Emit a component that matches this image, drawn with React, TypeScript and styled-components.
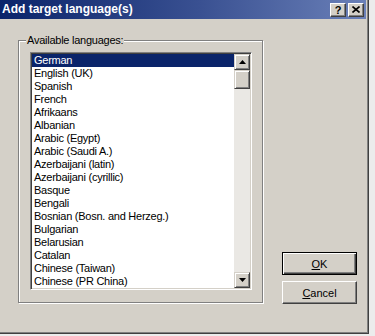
import React from 'react';
import styled, { createGlobalStyle } from 'styled-components';

const GlobalStyle = createGlobalStyle`
    html, body {
        margin: 0;
        padding: 0;
        background: #ececec;
    }
    body {
        font-family: "Liberation Sans", Arial, sans-serif;
        font-size: 11px;
    }
`

const Window = styled.div`
    width: 369px;
    height: 334px;
    box-sizing: border-box;
    background: #d4d0c8;
    border-right: 1px solid #404040;
    border-bottom: 1px solid #404040;
    box-shadow: inset -1px -1px #808080;
    padding-right: 2px;
    display: flex;
    flex-direction: column;
`

const TitleBar = styled.div`
    height: 19px;
    flex-shrink: 0;
    display: flex;
    align-items: center;
    padding: 0 2px 0 2px;
    background: linear-gradient(to right, #0a246a 0%, #3a5192 55%, #6a80b8 100%);
    color: #fff;
`

const TitleText = styled.span`
    flex: 1;
    font-weight: bold;
    font-size: 12px;
    line-height: 19px;
    white-space: nowrap;
`

const CaptionButtons = styled.div`
    display: flex;
    gap: 2px;
`

const Bevel = `
    box-sizing: border-box;
    background: #d4d0c8;
    border: 1px solid;
    border-color: #ffffff #404040 #404040 #ffffff;
    box-shadow: inset -1px -1px #808080;
`

const CaptionButton = styled.div`
    ${ Bevel }
    width: 16px;
    height: 14px;
    display: flex;
    align-items: center;
    justify-content: center;
    color: #000;
    font-weight: bold;
    font-size: 11px;
    line-height: 12px;
`

const Body = styled.div`
    display: flex;
    align-items: flex-end;
    padding: 15px 0 0 18px;
`

const GroupBox = styled.fieldset`
    margin: 0;
    width: 245px;
    box-sizing: border-box;
    padding: 6px 10px 12px 11px;
    border: 1px solid #808080;
    box-shadow: inset 1px 1px #fff, 1px 1px #fff;
`

const GroupLabel = styled.legend`
    margin-left: -4px;
    padding: 0 1px;
    line-height: 12px;
    font-size: 11px;
    letter-spacing: -0.25px;
    background: #d4d0c8;
    color: #000;
`

const ListBox = styled.div`
    width: 222px;
    height: 238px;
    box-sizing: border-box;
    display: flex;
    padding: 1px;
    background: #fff;
    border: 1px solid;
    border-color: #808080 #ffffff #ffffff #808080;
    box-shadow: inset 1px 1px #404040, inset -1px -1px #d4d0c8;
`

const Items = styled.div`
    flex: 1;
    overflow: hidden;
`

const Item = styled.div<{ $selected?: boolean; }>`
    height: 13px;
    line-height: 13px;
    padding-left: 2px;
    font-size: 11px;
    letter-spacing: -0.25px;
    white-space: nowrap;
    color: ${ props => props.$selected ? '#fff' : '#000' };
    background: ${ props => props.$selected ? '#0a246a' : 'transparent' };
`

const ScrollBar = styled.div`
    width: 16px;
    display: flex;
    flex-direction: column;
    background: #eae8e4;
`

const ScrollButton = styled.div`
    ${ Bevel }
    border-color: #d4d0c8 #404040 #404040 #d4d0c8;
    box-shadow: inset 1px 1px #fff, inset -1px -1px #808080;
    width: 16px;
    height: 16px;
    display: flex;
    align-items: center;
    justify-content: center;
`

const Thumb = styled.div`
    ${ Bevel }
    border-color: #d4d0c8 #404040 #404040 #d4d0c8;
    box-shadow: inset 1px 1px #fff, inset -1px -1px #808080;
    height: 19px;
`

const Track = styled.div`
    flex: 1;
`

const Buttons = styled.div`
    display: flex;
    flex-direction: column;
    gap: 6px;
    margin: 0 0 -1px 19px;
`

const PushButton = styled.div<{ $default?: boolean; }>`
    ${ Bevel }
    width: 75px;
    height: 23px;
    display: flex;
    align-items: center;
    justify-content: center;
    font-size: 11px;
    color: #000;
    ${ props => props.$default ? `
        border: 1px solid #000;
        box-shadow: inset 1px 1px #fff, inset -1px -1px #404040, inset -2px -2px #808080;
    ` : '' }
`

const Hot = styled.span`
    text-decoration: underline;
`

const languages = [
    'German',
    'English (UK)',
    'Spanish',
    'French',
    'Afrikaans',
    'Albanian',
    'Arabic (Egypt)',
    'Arabic (Saudi A.)',
    'Azerbaijani (latin)',
    'Azerbaijani (cyrillic)',
    'Basque',
    'Bengali',
    'Bosnian (Bosn. and Herzeg.)',
    'Bulgarian',
    'Belarusian',
    'Catalan',
    'Chinese (Taiwan)',
    'Chinese (PR China)',
];

const Arrow: React.FC<{ up?: boolean }> = ({ up }) => (
    <svg width="7" height="4" viewBox="0 0 7 4">
        { up
            ? <polygon points="3.5,0 7,4 0,4" fill="#000"/>
            : <polygon points="0,0 7,0 3.5,4" fill="#000"/> }
    </svg>
)

const App: React.FC = () => {
    return (
        <>
            <GlobalStyle/>
            <Window>
                <TitleBar>
                    <TitleText>Add target language(s)</TitleText>
                    <CaptionButtons>
                        <CaptionButton>?</CaptionButton>
                        <CaptionButton>
                            <svg width="8" height="7" viewBox="0 0 8 7">
                                <path d="M0.5 0.5 L7.5 6.5 M7.5 0.5 L0.5 6.5" stroke="#000" strokeWidth="1.6"/>
                            </svg>
                        </CaptionButton>
                    </CaptionButtons>
                </TitleBar>
                <Body>
                    <GroupBox>
                        <GroupLabel>Available languages:</GroupLabel>
                        <ListBox>
                            <Items>
                                { languages.map((name, i) => (
                                    <Item key={ name } $selected={ i === 0 }>{ name }</Item>
                                )) }
                            </Items>
                            <ScrollBar>
                                <ScrollButton><Arrow up/></ScrollButton>
                                <Thumb/>
                                <Track/>
                                <ScrollButton><Arrow/></ScrollButton>
                            </ScrollBar>
                        </ListBox>
                    </GroupBox>
                    <Buttons>
                        <PushButton $default><span><Hot>O</Hot>K</span></PushButton>
                        <PushButton><span><Hot>C</Hot>ancel</span></PushButton>
                    </Buttons>
                </Body>
            </Window>
        </>
    )
}

export default App;
